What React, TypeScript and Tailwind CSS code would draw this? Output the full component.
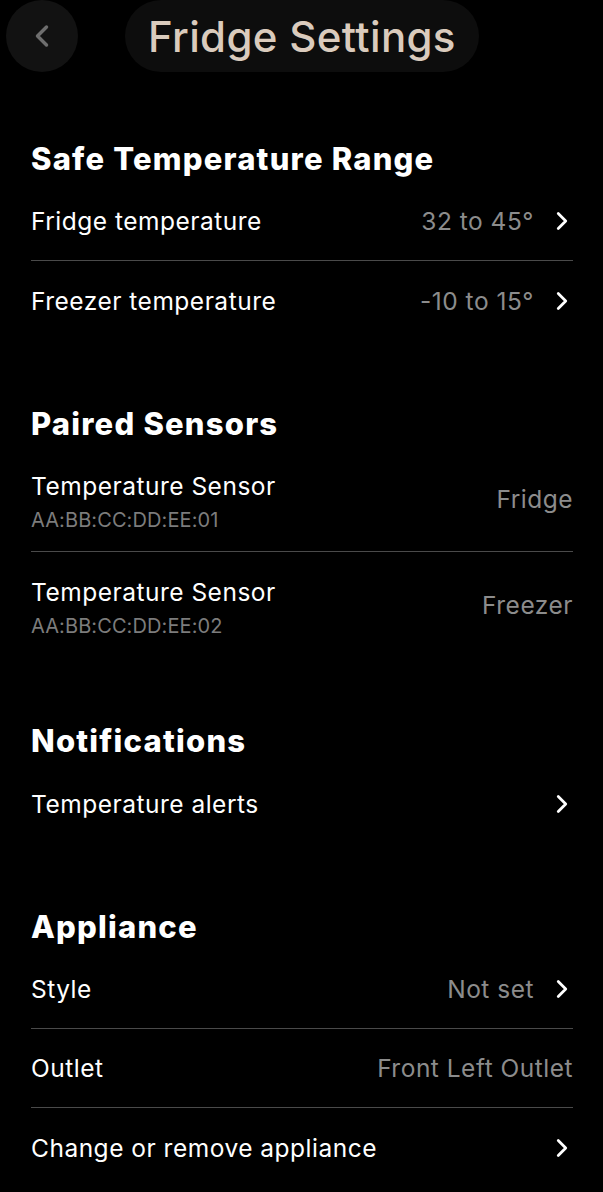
import { ChevronLeft, ChevronRight } from 'lucide-react';

const font = { fontFamily: 'Inter, "Noto Sans", sans-serif' };

type Row = { label: string; value?: string; sub?: string; chevron?: boolean };

const sections: { title: string; rows: Row[]; tall?: boolean }[] = [
  {
    title: 'Safe Temperature Range',
    rows: [
      { label: 'Fridge temperature', value: '32 to 45°', chevron: true },
      { label: 'Freezer temperature', value: '-10 to 15°', chevron: true },
    ],
  },
  {
    title: 'Paired Sensors',
    tall: true,
    rows: [
      { label: 'Temperature Sensor', sub: 'AA:BB:CC:DD:EE:01', value: 'Fridge' },
      { label: 'Temperature Sensor', sub: 'AA:BB:CC:DD:EE:02', value: 'Freezer' },
    ],
  },
  {
    title: 'Notifications',
    rows: [{ label: 'Temperature alerts', chevron: true }],
  },
  {
    title: 'Appliance',
    rows: [
      { label: 'Style', value: 'Not set', chevron: true },
      { label: 'Outlet', value: 'Front Left Outlet' },
      { label: 'Change or remove appliance', chevron: true },
    ],
  },
];

function SettingRow({ row, tall, last }: { row: Row; tall?: boolean; last: boolean }) {
  return (
    <div
      className={`flex items-center justify-between ${tall ? 'h-[105px]' : 'h-[79px]'} ${
        last ? '' : 'border-b border-[#4a4a4a]'
      }`}
    >
      <div className={`flex flex-col ${row.sub ? 'pt-[6px]' : ''}`}>
        <span className="text-[24.5px] leading-[30px] text-white tracking-[0.5px]">{row.label}</span>
        {row.sub && (
          <span className="text-[20px] leading-[26px] text-[#7c7c7c] mt-[6px] tracking-[0.1px]">{row.sub}</span>
        )}
      </div>
      <div className="flex items-center">
        {row.value && (
          <span className="text-[24.5px] leading-[30px] text-[#8c8c8c] tracking-[0.5px]">{row.value}</span>
        )}
        {row.chevron && (
          <ChevronRight className="ml-[13px] -mr-[4px] text-white" size={30} strokeWidth={2.2} />
        )}
      </div>
    </div>
  );
}

export default function App() {
  return (
    <main className="w-[603px] h-[1192px] bg-black overflow-hidden" style={font}>
      <header className="flex items-center h-[72px]">
        <button className="ml-[6px] w-[72px] h-[72px] rounded-full bg-[#121212] flex items-center justify-center">
          <ChevronLeft className="text-[#6e6e6e]" size={36} strokeWidth={2.3} />
        </button>
        <div className="ml-[47px] h-[72px] px-[23px] rounded-full bg-[#0d0d0d] flex items-center">
          <h1 className="text-[42px] font-medium text-[#dacbbd] tracking-[0.35px]">Fridge Settings</h1>
        </div>
      </header>

      <div className="pl-[31px] pr-[30px] pt-[69px] flex flex-col gap-[66px]">
        {sections.map((s) => (
          <section key={s.title}>
            <h2 className="text-[31px] leading-[36px] font-extrabold text-white tracking-[1.2px] mb-[5px]">
              {s.title}
            </h2>
            <div>
              {s.rows.map((r, i) => (
                <SettingRow key={i} row={r} tall={s.tall} last={i === s.rows.length - 1} />
              ))}
            </div>
          </section>
        ))}
      </div>
    </main>
  );
}
